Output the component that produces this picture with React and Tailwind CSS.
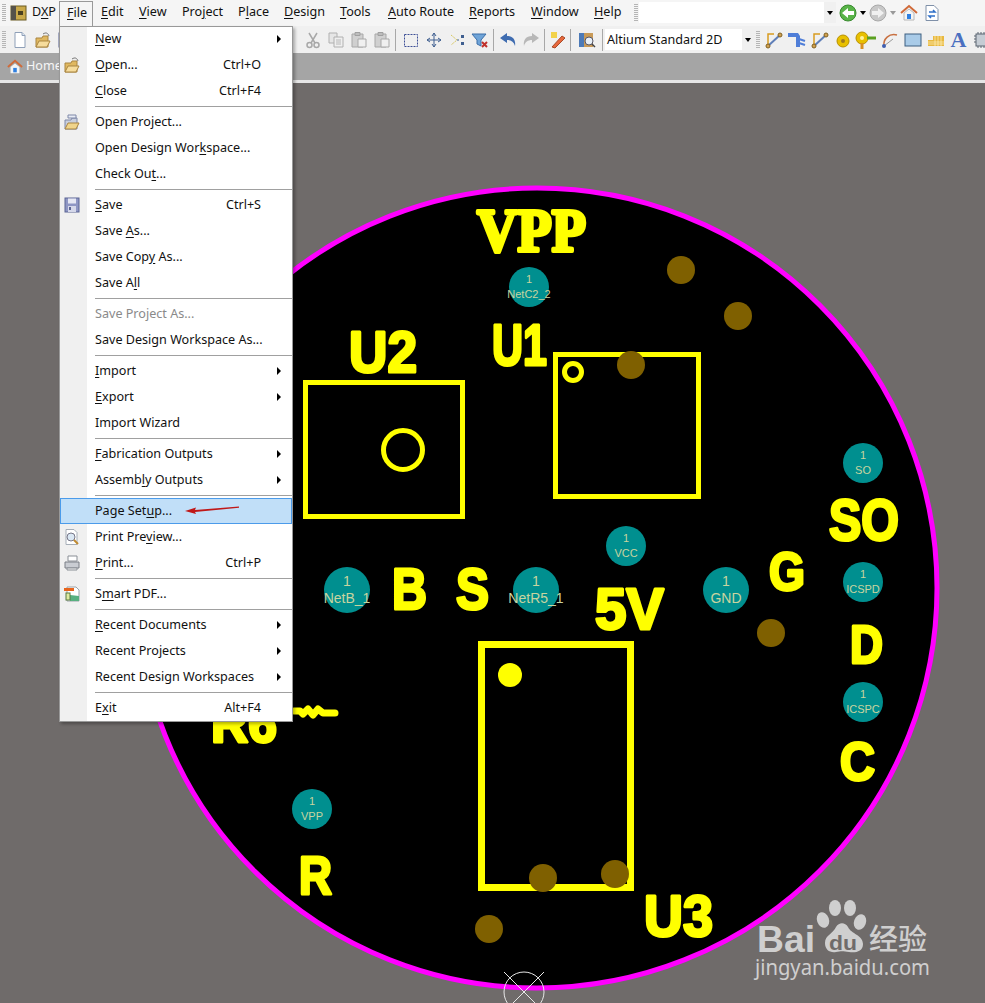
import React from "react";

const menuFont = "font-['Noto_Sans','Open_Sans',sans-serif]";

const menus = [
  ["&Edit", 38],
  ["&View", 43],
  ["Pro&ject", 56],
  ["P&lace", 46],
  ["&Design", 56],
  ["&Tools", 48],
  ["&Auto Route", 81],
  ["&Reports", 62],
  ["&Window", 63],
  ["&Help", 46],
];

const fileMenu = [
  { label: "&New", arrow: true },
  { label: "&Open...", key: "Ctrl+O", icon: "open" },
  { label: "&Close", key: "Ctrl+F4" },
  { sep: true },
  { label: "Open Project...", icon: "openProject" },
  { label: "Open Design Wor&kspace..." },
  { label: "Check Ou&t..." },
  { sep: true },
  { label: "&Save", key: "Ctrl+S", icon: "save" },
  { label: "Save &As..." },
  { label: "Save Cop&y As..." },
  { label: "Save A&ll" },
  { sep: true },
  { label: "Save Project As...", disabled: true },
  { label: "Save Design Workspace As..." },
  { sep: true },
  { label: "&Import", arrow: true },
  { label: "&Export", arrow: true },
  { label: "Import Wizard" },
  { sep: true },
  { label: "&Fabrication Outputs", arrow: true },
  { label: "Assemb&ly Outputs", arrow: true },
  { sep: true },
  { label: "Page Set&up...", active: true },
  { label: "Print Pre&view...", icon: "preview" },
  { label: "&Print...", key: "Ctrl+P", icon: "print" },
  { sep: true },
  { label: "S&mart PDF...", icon: "pdf" },
  { sep: true },
  { label: "&Recent Documents", arrow: true },
  { label: "Recent Projects", arrow: true },
  { label: "Recent Design Workspaces", arrow: true },
  { sep: true },
  { label: "E&xit", key: "Alt+F4" },
];

const Mnemonic = ({ text }) => {
  const i = text.indexOf("&");
  if (i < 0) return <span>{text}</span>;
  return (
    <span>
      {text.slice(0, i)}
      <span className="underline underline-offset-2">{text[i + 1]}</span>
      {text.slice(i + 2)}
    </span>
  );
};

const Svg = ({ children, w = 18, h = 18 }) => (
  <svg width={w} height={h} viewBox={`0 0 ${w} ${h}`} className="shrink-0">
    {children}
  </svg>
);

const icons = {
  logo: (
    <Svg>
      <rect x="1" y="2" width="15" height="14" fill="#c9a94a" stroke="#6b5a20" />
      <rect x="1" y="2" width="5" height="14" fill="#55524a" />
      <path d="M8 7h5v4H8z" fill="#4a4020" />
    </Svg>
  ),
  newDoc: (
    <Svg>
      <path d="M4 1.500h7l3 3v12H4z" fill="#fff" stroke="#8fa0b8" />
      <path d="M11 1.500v3h3" fill="#dde6f0" stroke="#8fa0b8" />
    </Svg>
  ),
  open: (
    <Svg>
      <path d="M2 7h6l1-2h5v11H2z" fill="#e0b860" stroke="#a98540" />
      <path d="M2 16l3-6h11l-3 6z" fill="#f6dc9c" stroke="#a98540" />
      <path d="M9 3c3-2 5-1 6 2" fill="none" stroke="#777" />
    </Svg>
  ),
  openProject: (
    <Svg>
      <path d="M2 7h6l1-2h5v11H2z" fill="#c9cfdd" stroke="#7f88a8" />
      <path d="M2 16l3-6h11l-3 6z" fill="#f0d48a" stroke="#a98540" />
      <path d="M5 2h8v3H5z" fill="#e8ecf5" stroke="#7f88a8" />
    </Svg>
  ),
  save: (
    <Svg>
      <rect x="2" y="2" width="14" height="14" fill="#8e96c4" stroke="#5b6494" />
      <rect x="5" y="2.500" width="8" height="5" fill="#e6e8f4" />
      <rect x="5" y="10" width="8" height="6" fill="#d5d8ea" />
      <rect x="6" y="11" width="2" height="3" fill="#5b6494" />
    </Svg>
  ),
  preview: (
    <Svg>
      <path d="M3 1.500h8l3 3v12H3z" fill="#fff" stroke="#a6aeb8" />
      <circle cx="8" cy="9" r="4" fill="#dbe8f4" stroke="#778" />
      <path d="M11 12l4 4" stroke="#c08a30" strokeWidth="2" />
    </Svg>
  ),
  print: (
    <Svg>
      <path d="M5 2h9v5H5z" fill="#fff" stroke="#8a8f96" />
      <path d="M2 8h14v6H2z" fill="#c9ccd2" stroke="#7a7f86" />
      <path d="M4 14h10v2H4z" fill="#f4f4f4" stroke="#8a8f96" />
    </Svg>
  ),
  pdf: (
    <Svg>
      <path d="M4 2h9l3 3v11H4z" fill="#fff" stroke="#9aa2a8" />
      <path d="M7 10l9 1v5H7z" fill="#58b080" />
      <rect x="1" y="3" width="10" height="3" fill="#e8641c" />
      <rect x="3" y="8" width="4" height="7" fill="#dfe9a0" stroke="#5a7a40" />
    </Svg>
  ),
  cut: (
    <Svg>
      <path d="M5 2l6 10M13 2L7 12" stroke="#a8a8a8" strokeWidth="1.500" />
      <circle cx="5.500" cy="14" r="2.500" fill="none" stroke="#a8a8a8" strokeWidth="1.500" />
      <circle cx="12.500" cy="14" r="2.500" fill="none" stroke="#a8a8a8" strokeWidth="1.500" />
    </Svg>
  ),
  copy: (
    <Svg>
      <path d="M2 2h8v10H2z" fill="#e6e6e6" stroke="#b0b0b0" />
      <path d="M7 6h9v10H7z" fill="#efefef" stroke="#b0b0b0" />
      <path d="M9 9h5M9 11h5M9 13h5" stroke="#b8b8b8" />
    </Svg>
  ),
  paste: (
    <Svg>
      <path d="M2 3h11v13H2z" fill="#d0d0d0" stroke="#a8a8a8" />
      <path d="M5 1.500h5v3H5z" fill="#bdbdbd" stroke="#a0a0a0" />
      <path d="M8 8h8v8H8z" fill="#f0f0f0" stroke="#a8a8a8" />
    </Svg>
  ),
  select: (
    <Svg>
      <rect x="2.500" y="3.500" width="13" height="12" fill="none" stroke="#3d4f96" strokeDasharray="2 1" />
    </Svg>
  ),
  move: (
    <Svg>
      <path d="M9 2v14M2 9h14M9 2L7 5M9 2l2 3M9 16l-2-3M9 16l2-3M2 9l3-2M2 9l3 2M16 9l-3-2M16 9l-3 2" stroke="#3f5f90" fill="none" />
    </Svg>
  ),
  deselect: (
    <Svg>
      <path d="M3 4l6 5-6 5" fill="none" stroke="#d8c860" strokeDasharray="2 1" />
      <rect x="13" y="4" width="3" height="3" fill="#3f5f90" />
      <rect x="13" y="11" width="3" height="3" fill="#3f5f90" />
      <path d="M9 9h2" stroke="#3f5f90" />
    </Svg>
  ),
  filter: (
    <Svg>
      <path d="M1 3h14l-5 6v6l-4-2V9z" fill="#6fa4d8" stroke="#3d6fa8" />
      <path d="M11 11l5 5M16 11l-5 5" stroke="#c0302c" strokeWidth="2" />
    </Svg>
  ),
  undo: (
    <Svg>
      <path d="M1 7l7-5v3c6 0 9 4 8 10-1-4-4-6-8-6v3z" fill="#3f6cb0" />
    </Svg>
  ),
  redo: (
    <Svg>
      <path d="M17 7l-7-5v3C4 5 1 9 2 15c1-4 4-6 8-6v3z" fill="#b8b8b8" />
    </Svg>
  ),
  wand: (
    <Svg>
      <rect x="2" y="1" width="6" height="6" fill="#f2d24a" />
      <path d="M3 16l10-11 3 2L6 17z" fill="#e8683c" stroke="#a84a28" />
    </Svg>
  ),
  browse: (
    <Svg>
      <rect x="1" y="2" width="5" height="14" fill="#4c7ab8" />
      <rect x="6" y="2" width="9" height="14" fill="#c89a58" />
      <circle cx="11" cy="10" r="4" fill="#e8f0f8" stroke="#556" />
      <path d="M14 13l3 3" stroke="#444" strokeWidth="1.500" />
    </Svg>
  ),
  track: (
    <Svg>
      <path d="M3 15V3h6" fill="none" stroke="#d89c20" strokeWidth="1.500" />
      <path d="M3 15L15 4" stroke="#5f7fb8" strokeWidth="2" />
      <circle cx="3" cy="15" r="2" fill="#d0a050" stroke="#806020" />
      <circle cx="15" cy="4" r="2" fill="#d0a050" stroke="#806020" />
    </Svg>
  ),
  bus: (
    <Svg>
      <path d="M0 2h10l2 3v11H8V6H0z" fill="#4f7ed8" />
      <path d="M11 8l6 2M11 12l6 2" stroke="#4f7ed8" strokeWidth="2" />
    </Svg>
  ),
  pad: (
    <Svg>
      <circle cx="9" cy="10" r="6" fill="#e8c000" stroke="#b89000" />
      <circle cx="9" cy="10" r="2" fill="#a07a20" />
    </Svg>
  ),
  via: (
    <Svg w={24}>
      <circle cx="8" cy="7" r="6" fill="#e8c000" stroke="#b89000" />
      <circle cx="8" cy="7" r="2" fill="#fff3a0" />
      <path d="M8 12v6" stroke="#d89020" strokeWidth="3" />
      <path d="M13 7h9" stroke="#5aa020" strokeWidth="3" />
    </Svg>
  ),
  arc: (
    <Svg>
      <path d="M3 15C2 8 8 2 16 4" fill="none" stroke="#c87040" strokeWidth="1.500" />
      <path d="M3 15l9-7" stroke="#999" />
      <circle cx="3" cy="15" r="2" fill="#3f5fb0" />
    </Svg>
  ),
  fill: (
    <Svg>
      <rect x="1" y="3" width="16" height="12" fill="#a9cbe8" stroke="#3d5f80" />
    </Svg>
  ),
  poly: (
    <Svg>
      <path d="M1 15V9h5V5h11v10z" fill="#e8b840" />
      <path d="M1 11h16M1 13h16M8 5v10M11 5v10M14 5v10" stroke="#fff2c0" strokeWidth=".7" />
    </Svg>
  ),
  letter: <span className="w-[18px] text-center text-[22px] leading-[18px] font-bold text-[#4a6fc0] font-['Liberation_Serif',serif]">A</span>,
  chip: (
    <Svg>
      <rect x="3" y="3" width="12" height="12" fill="#c5ccd4" stroke="#5a6470" />
      <path d="M5 1v2M8 1v2M11 1v2M14 1v2M5 15v2M8 15v2M11 15v2M14 15v2M1 5h2M1 8h2M1 11h2M15 5h2M15 8h2M15 11h2" stroke="#5a6470" />
    </Svg>
  ),
  back: (
    <Svg>
      <circle cx="9" cy="9" r="8" fill="#58b448" stroke="#3a8a30" />
      <path d="M3 9l6-5v3h6v4H9v3z" fill="#fff" />
    </Svg>
  ),
  forward: (
    <Svg>
      <circle cx="9" cy="9" r="8" fill="#c8c8c8" stroke="#a8a8a8" />
      <path d="M15 9L9 4v3H3v4h6v3z" fill="#f0f0f0" />
    </Svg>
  ),
  home: (
    <Svg>
      <path d="M1 9l8-7 8 7" fill="none" stroke="#d06a38" strokeWidth="2" />
      <path d="M4 9l5-4 5 4v7H4z" fill="#f4f4f4" stroke="#b8b8b8" />
      <rect x="7" y="10" width="4" height="5" fill="#2f7fe0" />
    </Svg>
  ),
  sync: (
    <Svg>
      <path d="M3 1.500h8l4 4v11H3z" fill="#fff" stroke="#7f90a8" />
      <path d="M6 8h6l-2-2M12 12H6l2 2" fill="none" stroke="#2f6fc8" strokeWidth="1.500" />
    </Svg>
  ),
};

const Grip = () => (
  <div className="w-[4px] h-[18px] mx-[2px] shrink-0 bg-[repeating-linear-gradient(to_bottom,#b5b5b5_0,#b5b5b5_1px,transparent_1px,transparent_2px)]" />
);

const Divider = () => <div className="w-px h-[22px] mx-[2px] bg-[#a8a8a8] shrink-0" />;

const Caret = ({ color = "border-t-black" }) => (
  <span className={`block w-0 h-0 shrink-0 border-x-[3px] border-t-[4px] border-x-transparent ${color}`} />
);

const Tool = ({ name, w = 23 }) => (
  <div className="flex items-center justify-center shrink-0 h-full" style={{ width: w }}>
    {icons[name]}
  </div>
);

const ToolRun = ({ names }) => names.map((n, i) => <Tool key={i} name={n} />);

const Combo = ({ className, children }) => (
  <div className={`flex items-center justify-between h-[21px] bg-white shrink-0 ${className}`}>
    <span className="pl-[2px] pt-[1px] whitespace-nowrap">{children}</span>
    <span className="flex items-center justify-center w-[12px] h-full bg-[#f0f0f0]">
      <Caret />
    </span>
  </div>
);

const MenuRow = ({ item }) => {
  if (item.sep) {
    return (
      <div className="h-[5px] flex items-center pl-[35px]">
        <div className="h-px w-full bg-[#a0a0a0]" />
      </div>
    );
  }
  return (
    <div
      className={`relative h-[26px] flex items-center pl-[35px] pr-[11px] ${
        item.disabled ? "text-[#8a8a8a]" : "text-[#111]"
      } ${item.active ? "bg-[#c1dff8] outline outline-[#4b9bea] -outline-offset-1" : ""}`}
    >
      {item.icon && <div className="absolute left-[3px] top-[4px]">{icons[item.icon]}</div>}
      <Mnemonic text={item.label} />
      {item.key && <span className="ml-auto pr-[20px] text-[#111]">{item.key}</span>}
      {item.arrow && (
        <span className="ml-auto w-0 h-0 border-y-[4px] border-l-[4px] border-y-transparent border-l-black" />
      )}
    </div>
  );
};

const Pad = ({ x, y, r = 20, net, size = 11 }) => (
  <g textAnchor="middle" fill="#c8d4a0" fontFamily="'Liberation Sans', sans-serif" fontSize={size}>
    <circle cx={x} cy={y} r={r} fill="#008f8f" />
    <text x={x} y={y - 4}>1</text>
    <text x={x} y={y + (r > 20 ? 13 : 11)}>{net}</text>
  </g>
);

const Label = ({ x, y, w, size, serif, children }) => (
  <text
    x={x}
    y={y}
    fontSize={size}
    textLength={w}
    lengthAdjust="spacingAndGlyphs"
    fontWeight="700"
    fontFamily={serif ? "'Liberation Serif', serif" : "'Liberation Sans', sans-serif"}
    fill="#ffff00"
    stroke="#ffff00"
    strokeWidth={serif ? 4 : 3}
    strokeLinejoin="round"
  >
    {children}
  </text>
);

const Board = () => (
  <svg viewBox="0 83 985 920" className="block w-full h-full">
    <circle cx="537" cy="588" r="400" fill="#000" stroke="#ff00ff" strokeWidth="5" />

    <g fill="none" stroke="#ffff00">
      <rect x="305.500" y="382.500" width="157" height="134" strokeWidth="5" />
      <circle cx="403" cy="450" r="19.500" strokeWidth="5" />
      <rect x="555.500" y="354.500" width="143" height="142" strokeWidth="5" />
      <circle cx="573" cy="372" r="8.500" strokeWidth="5" />
      <rect x="481.500" y="644.500" width="149" height="243" strokeWidth="7" />
      <path d="M294 711h6l3 3 5-5 5 6 5-6 5 4h12" strokeWidth="7" strokeLinecap="round" strokeLinejoin="round" />
    </g>
    <circle cx="510" cy="675" r="12" fill="#ffff00" />

    <g fill="#7f6000">
      <circle cx="681" cy="270" r="14" />
      <circle cx="738" cy="316" r="14" />
      <circle cx="631" cy="365" r="14" />
      <circle cx="771" cy="633" r="14" />
      <circle cx="543" cy="878" r="14" />
      <circle cx="615" cy="874" r="14" />
      <circle cx="489" cy="929" r="14" />
    </g>

    <Label x={477} y={251} w={109} size={62} serif>VPP</Label>
    <Label x={349} y={372} w={68} size={58}>U2</Label>
    <Label x={492} y={365} w={55} size={58}>U1</Label>
    <Label x={829} y={540} w={70} size={58}>SO</Label>
    <Label x={392} y={609} w={35} size={58}>B</Label>
    <Label x={456} y={609} w={33} size={58}>S</Label>
    <Label x={595} y={629} w={69} size={58}>5V</Label>
    <Label x={769} y={590} w={36} size={54}>G</Label>
    <Label x={850} y={663} w={33} size={54}>D</Label>
    <Label x={840} y={780} w={35} size={54}>C</Label>
    <Label x={299} y={894} w={33} size={54}>R</Label>
    <Label x={644} y={936} w={69} size={58}>U3</Label>
    <Label x={211} y={742} w={66} size={54}>R6</Label>

    <Pad x={529} y={287} net="NetC2_2" />
    <Pad x={863} y={463} net="SO" />
    <Pad x={626} y={546} net="VCC" />
    <Pad x={347} y={590} r={23} net="NetB_1" size={14} />
    <Pad x={536} y={590} r={23} net="NetR5_1" size={14} />
    <Pad x={726} y={590} r={23} net="GND" size={14} />
    <Pad x={863} y={582} net="ICSPD" />
    <Pad x={863} y={702} net="ICSPC" />
    <Pad x={312} y={809} net="VPP" />

    <g fill="none" stroke="#e8e8e8">
      <circle cx="524" cy="992" r="20" />
      <path d="M504 972l40 40M544 972l-40 40" />
    </g>

    {/* baidu watermark */}
    <g fill="#cfcfcf">
      <text x="757" y="952" fontSize="37" fontWeight="700" fontFamily="'Liberation Sans', sans-serif" textLength="58" lengthAdjust="spacingAndGlyphs">Bai</text>
      <ellipse cx="823" cy="920" rx="6" ry="8" transform="rotate(-20 823 920)" />
      <ellipse cx="835" cy="908" rx="6" ry="8" />
      <ellipse cx="850" cy="908" rx="6" ry="8" />
      <ellipse cx="860" cy="922" rx="6" ry="8" transform="rotate(20 860 922)" />
      <path d="M825 943c0-8 8-9 11-16 3-5 9-5 12 0 3 7 15 8 15 17 0 8-8 9-14 8-6-1-8-1-13 0-6 1-11-2-11-9z" />
      <text x="829" y="950" fontSize="20" fontWeight="700" fill="#6f6b6a" fontFamily="'Liberation Sans', sans-serif" textLength="28" lengthAdjust="spacingAndGlyphs">du</text>
      <text x="869" y="950" fontSize="29" fontWeight="500" fontFamily="'Noto Sans CJK SC', sans-serif">经验</text>
      <text x="755" y="975" fontSize="21" fontFamily="'Noto Sans', sans-serif" textLength="175" lengthAdjust="spacingAndGlyphs">jingyan.baidu.com</text>
    </g>
  </svg>
);

export default function App() {
  return (
    <div className={`relative w-[985px] h-[1003px] overflow-hidden flex flex-col bg-[#6f6b6a] text-[12.6px] leading-none text-[#111] ${menuFont}`}>
      {/* menu bar */}
      <div className="flex items-center h-[26px] pb-[1px] bg-[#f5f5f5] shrink-0">
        <Grip />
        <div className="ml-[2px] flex items-center gap-[4px] w-[49px] shrink-0">
          {icons.logo}
          <span>D<span className="underline underline-offset-2">X</span>P</span>
        </div>
        <div className="h-[25px] mt-[1px] w-[34px] pl-[7px] flex items-center border-x border-t border-[#999] bg-[#f5f5f5] relative z-20 shrink-0">
          <Mnemonic text="&File" />
        </div>
        {menus.map(([label, w]) => (
          <div key={label} className="pl-[8px] shrink-0" style={{ width: w }}>
            <Mnemonic text={label} />
          </div>
        ))}
        <Grip />
        <Combo className="w-[197px] ml-[-1px]" />
        <div className="flex items-center h-full w-[112px] pl-[3px] shrink-0">
          {icons.back}
          <span className="flex mx-[3px]"><Caret /></span>
          {icons.forward}
          <span className="flex mx-[3px]"><Caret color="border-t-[#999]" /></span>
          <span className="ml-[1px]">{icons.home}</span>
          <span className="ml-[5px]">{icons.sync}</span>
        </div>
      </div>

      {/* toolbar */}
      <div className="flex items-center h-[27px] bg-[#f0f0f0] shrink-0 overflow-hidden">
        <Grip />
        <ToolRun names={["newDoc", "open", "save"]} />
        <div className="w-[224px] shrink-0" />
        <ToolRun names={["cut", "copy", "paste", "paste"]} />
        <Divider />
        <div className="w-[1px] shrink-0" />
        <ToolRun names={["select", "move", "deselect", "filter"]} />
        <Divider />
        <ToolRun names={["undo", "redo"]} />
        <Divider />
        <Tool name="wand" w={21} />
        <Divider />
        <Tool name="browse" w={27} />
        <Divider />
        <Combo className="w-[149px]">Altium Standard 2D</Combo>
        <Grip />
        <ToolRun names={["track", "bus", "track", "pad"]} />
        <Tool name="via" w={24} />
        <ToolRun names={["arc", "fill", "poly", "letter", "chip"]} />
      </div>

      {/* document tabs */}
      <div className="flex items-center h-[27px] shrink-0 pl-[7px] gap-[3px] text-white/90 bg-[#a5a5a5]">
        <svg width="16" height="16" viewBox="0 0 18 18">
          <path d="M1 9l8-7 8 7" fill="none" stroke="#d06a38" strokeWidth="2" />
          <path d="M4 9l5-4 5 4v7H4z" fill="#f4f4f4" />
          <rect x="7" y="10" width="4" height="5" fill="#2f7fe0" />
        </svg>
        Home
      </div>
      <div className="h-[3px] shrink-0 bg-[#e6e6e6]" />

      {/* pcb view */}
      <div className="flex-1 min-h-0">
        <Board />
      </div>

      {/* file menu */}
      <div className="absolute left-[59px] top-[26px] z-10 w-[234px] h-[696px] border border-[#999] bg-white shadow-[2px_2px_3px_rgba(0,0,0,0.3)]">
        <div className="absolute left-0 top-0 bottom-0 w-[27px] bg-[#f0f0f0]" />
        <div className="relative flex flex-col -mt-[1px]">
          {fileMenu.map((item, i) => (
            <MenuRow key={i} item={item} />
          ))}
        </div>
        <svg width="60" height="10" viewBox="0 0 60 10" className="absolute left-[124px] top-[478px]">
          <path d="M1 6L12 2.500L11 5L55 1.500L55 2.800L11 7L12 9z" fill="#c01818" />
        </svg>
      </div>
    </div>
  );
}
